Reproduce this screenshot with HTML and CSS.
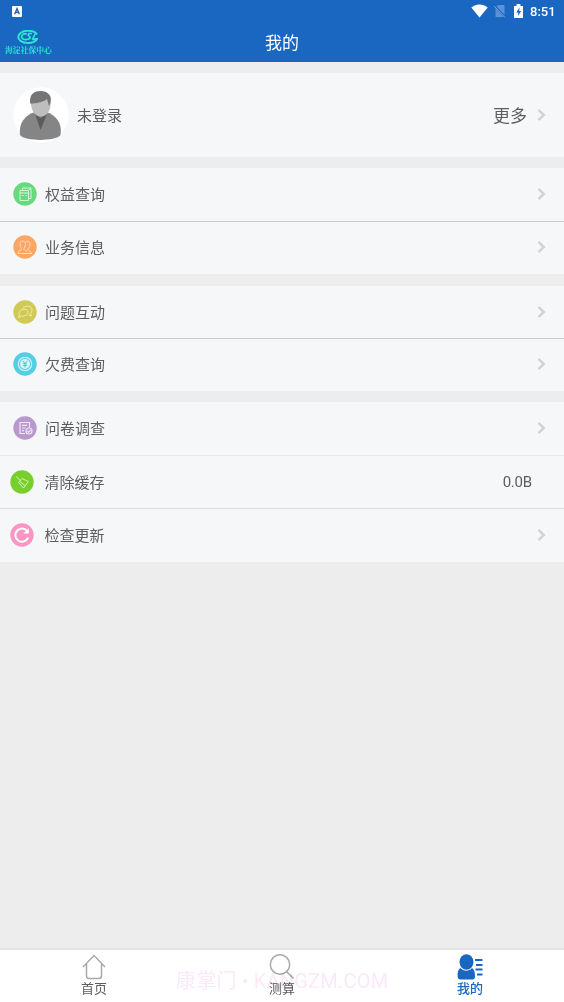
FILE: index.html
```html
<!DOCTYPE html>
<html lang="zh-CN">
<head>
<meta charset="utf-8">
<title>我的</title>
<link rel="stylesheet" href="styles.css">
</head>
<body>
<svg class="defs" width="0" height="0"><defs><symbol id="chevron" viewBox="0 0 9 14"><path d="M1.500 1.800 6.800 7 1.500 12.200" fill="none" stroke="#d2d3d5" stroke-width="2.500"/></symbol></defs></svg>
<div class="screen">
  <header class="header">
    <div class="status">
      <svg class="app-badge" viewBox="0 0 10 11"><rect width="10" height="11" rx="1" fill="#fff"/><path d="M2.700 8.200 5 2.500 7.300 8.200M3.600 6.400h2.800" fill="none" stroke="#315b9d" stroke-width="1.400"/></svg>
      <svg class="wifi" viewBox="0 0 17 14"><path d="M.3 3.600C5-.5 12-.5 16.700 3.600L8.500 13.600Z" fill="#fff"/></svg>
      <svg class="sim" viewBox="0 0 12 14"><path d="M4 1h6.500v12h-9V3.500Z" fill="#5b92d5"/><path d="M0 1.300 11.500 13.500" stroke="#1967c1" stroke-width="2"/><path d="M0 2 11 13.500" stroke="#79a6dc" stroke-width="1"/></svg>
      <svg class="battery" viewBox="0 0 9 14"><path d="M0 2h2.600V0h3.800v2H9v12H0Z" fill="#fff"/><path d="M5.500 3.600 2.200 8.500h2v3.400l2.900-5H5.200Z" fill="#1967c1"/></svg>
      <span class="time">8:51</span>
    </div>
    <div class="titlebar">
      <div class="brand">
        <svg class="brand-mark" viewBox="0 0 22 14"><path d="M20 4.500C17-.5 5-.5 2 4.800-.5 9.500 5 13 11 13c4 0 7.500-1.300 9-4" fill="none" stroke="#2de8cf" stroke-width="1.900"/><path d="M9.800 4C6.800 3 4.500 5 4.700 7s2.800 3 4.800 2.400M15 3.700c-2.500-.7-4.500.5-3.500 1.800l1.300 1.300c1 1.500-1.500 3-4 2.600M18.300 3.500l-3 6.300M15.500 9.700l5.500-1" fill="none" stroke="#2de8cf" stroke-width="1.700"/></svg>
        <span class="brand-name">海淀社保中心</span>
      </div>
      <h1 class="title">我的</h1>
    </div>
  </header>

  <main class="content">
    <section class="profile">
      <svg class="avatar" viewBox="0 0 56 56"><circle cx="28" cy="28" r="27.700" fill="#fff"/><path d="M7 48C5.500 36 12 28 22 25h11c10 3 16.500 11 14.500 23-5 6.500-35.500 6.500-40.500 0Z" fill="#858585"/><path d="m22 27 5.500 4 6.500-4-6.500 16Z" fill="#5c5c5c"/><path d="M18 14Q20 8 28 8t9.500 6c1 9-3.500 15.500-9.700 15.500S17.500 23 18 14Z" fill="#bebebe"/><path d="M17.200 16.500C16 8 20.500 4 27.500 4s12 4.500 10 11.500L36 19l-2-7c-5 3.500-10.500 4.300-16.800 4.500Z" fill="#757575"/></svg>
      <span class="user">未登录</span>
      <span class="more">更多</span>
      <svg class="chevron"><use href="#chevron"/></svg>
    </section>

    <section class="group">
      <div class="row">
        <svg class="icon" viewBox="0 0 24 24"><circle cx="12" cy="12" r="11.700" fill="#69d97e"/><g fill="none" stroke="#d2f6d8" stroke-width="1"><path d="M7 8.500h8.500V18.500H7ZM9.500 8V6h8.500v10.500h-2M7 11h8.500M9 13.500h1.500M12.500 13.500H14M16 8l2-2"/></g></svg>
        <span class="label">权益查询</span><svg class="chevron"><use href="#chevron"/></svg>
      </div>
      <div class="row">
        <svg class="icon" viewBox="0 0 24 24"><circle cx="12" cy="12" r="11.700" fill="#faa765"/><g fill="none" stroke="#ffdcbd" stroke-width="1"><path d="M8.500 13.500C6.500 11 6.500 6 9.500 6s4 4 1.500 7.500v1.500M12.500 7.500c1-2 4.500-2 4.500 1.500 0 2-1 3.500-2 4.500l.3 1.500 3.700 3.500H5l1-2.500 3-1.500M12 15l2 1.500"/></g></svg>
        <span class="label">业务信息</span><svg class="chevron"><use href="#chevron"/></svg>
      </div>
    </section>

    <section class="group group-short">
      <div class="row">
        <svg class="icon" viewBox="0 0 24 24"><circle cx="12" cy="12" r="11.700" fill="#d1c955"/><g fill="none" stroke="#f2edac" stroke-width="1"><path d="M9.500 8.500C11 5.500 18 5 19 9c.5 2-1 4-1.500 4.500l1 2.500-3-1.200"/><path d="M6 13.500C5 9.500 14 7.500 15 11.500c.6 3.500-4 5-6.500 4.500L5.500 17.500l1-2.500Z"/></g></svg>
        <span class="label">问题互动</span><svg class="chevron"><use href="#chevron"/></svg>
      </div>
      <div class="row">
        <svg class="icon" viewBox="0 0 24 24"><circle cx="12" cy="12" r="11.700" fill="#54cee2"/><circle cx="12" cy="12" r="6.700" fill="none" stroke="#c7f4f8" stroke-width="1.200"/><circle cx="12" cy="12" r="5" fill="#d3f5f7"/><path d="m9.800 8.800 2.200 2.700 2.200-2.700M12 11.500V15.500M10 11.800h4M10.300 13.500h3.400" fill="none" stroke="#3fc3cd" stroke-width=".9"/></svg>
        <span class="label">欠费查询</span><svg class="chevron"><use href="#chevron"/></svg>
      </div>
    </section>

    <section class="group group-last">
      <div class="row">
        <svg class="icon" viewBox="0 0 24 24"><circle cx="12" cy="12" r="11.700" fill="#b79acb"/><g fill="none" stroke="#f2e5fb" stroke-width="1.200"><path d="M12 17.500H7v-11h9.500v5M9 9.300h5M9 12h3.500M9 14.700h2"/><circle cx="16" cy="15" r="3"/><path d="m14.500 15 1.200 1.200 2-2.300"/></g></svg>
        <span class="label">问卷调查</span><svg class="chevron"><use href="#chevron"/></svg>
      </div>
      <div class="row row-tool row-soft">
        <svg class="icon" viewBox="0 0 24 24"><circle cx="12" cy="12" r="11.700" fill="#78cf2c"/><path d="m6 6.500 4.500 4M8.500 12.500l3.500-4 6.300 3-4.800 6.500ZM9.500 11.300l5.500 4.200" fill="none" stroke="#d2f5ac" stroke-width="1"/></svg>
        <span class="label">清除缓存</span><span class="size">0.0B</span>
      </div>
      <div class="row row-tool">
        <svg class="icon" viewBox="0 0 24 24"><circle cx="12" cy="12" r="11.700" fill="#fa96c4"/><path d="M17.200 8.100a6.600 6.600 0 1 0 .9 6.500" fill="none" stroke="#fff" stroke-width="2"/><path d="M18.800 5v5.600h-5.400Z" fill="#fff"/></svg>
        <span class="label">检查更新</span><svg class="chevron"><use href="#chevron"/></svg>
      </div>
    </section>
  </main>

  <nav class="tabs">
    <div class="tab">
      <svg class="tab-icon" viewBox="0 0 26 26"><path d="M2 13 13 1.500 24 13M5.500 10v12q0 2.500 2.500 2.500h10q2.500 0 2.500-2.500V10" fill="none" stroke="#aaa" stroke-width="1.500"/></svg><span>首页</span>
    </div>
    <div class="tab">
      <svg class="tab-icon" viewBox="0 0 26 26"><circle cx="11" cy="10.500" r="9.700" fill="none" stroke="#aaa" stroke-width="1.500"/><path d="m17.500 17.500 7 7" stroke="#aaa" stroke-width="1.600"/></svg><span>测算</span>
    </div>
    <div class="tab tab-active">
      <svg class="tab-icon" viewBox="0 0 26 26"><ellipse cx="9.500" cy="8" rx="7" ry="7.700" fill="#1967c1"/><path d="M3.500 14C.5 16 .5 19 .7 23q.2 2.500 3 2.500h11.600q2.700 0 2.700-3c0-4-.5-7-3-8.500-3 3.500-8.500 3.500-11.500 0Z" fill="#1967c1"/><path d="M18 6h7.500M19 11h6.500M18.500 15.500h7M20 20.500h5.500" stroke="#1967c1" stroke-width="1.800"/></svg><span>我的</span>
    </div>
    <div class="watermark">康掌门 • KANGZM.COM</div>
  </nav>
</div>
</body>
</html>
```

FILE: styles.css
```css
* { box-sizing: border-box; }
body { margin: 0; font-family: Roboto, "Noto Sans CJK SC", sans-serif; color: #5c5d5f; }
.defs { display: block; }
.screen { width: 564px; height: 1002px; display: flex; flex-direction: column; background: #ededed; }
.header { height: 62px; background: #1967c1; color: #fff; }
.status { height: 22px; display: flex; align-items: center; padding: 0 8px 0 12px; }
.app-badge { width: 10px; height: 11px; margin-right: auto; }
.wifi { width: 17px; height: 14px; margin-right: 6px; }
.sim { width: 12px; height: 14px; margin-right: 8px; }
.battery { width: 9px; height: 14px; margin-right: 7px; }
.time { font-size: 13px; font-weight: 500; line-height: 22px; padding-top: 2px; width: 26px; white-space: nowrap; }
.titlebar { height: 40px; display: grid; grid-template-columns: 1fr auto 1fr; }
.brand { display: flex; flex-direction: column; padding: 8px 0 0 5px; width: 54px; }
.brand-mark { width: 22px; height: 14px; margin-left: 12px; }
.brand-name { font-family: "Noto Serif CJK SC", "Noto Sans CJK SC", serif; font-size: 7.800px; font-weight: 700; line-height: 12px; color: #2de8cf; white-space: nowrap; }
.title { margin: 0; font-size: 17px; font-weight: 400; line-height: 40px; padding-top: 1px; }
.content { flex: 1; padding-top: 11px; }
.profile { height: 84px; display: flex; align-items: center; background: #f6f7f9; padding: 0 18px 0 12.500px; }
.avatar { width: 56px; height: 56px; margin-right: 8.500px; }
.user { font-size: 15px; padding-bottom: 2px; }
.more { font-size: 17px; margin-left: auto; padding-bottom: 2px; }
.chevron { width: 9px; height: 14px; margin-left: auto; }
.more + .chevron { margin-left: 10px; }
.group { margin-top: 11px; background: #f6f7f9; }
.group + .group { margin-top: 12px; }
.group + .group-last { margin-top: 11px; }
.row { height: 53px; display: flex; align-items: center; padding: 0 18px 1px 12.500px; }
.row + .row { border-top: 1px solid #c9cacc; padding-bottom: 2px; }
.group-short .row:first-child { height: 52px; }
.group-last .row:last-child { height: 54px; }
.group-last .row + .row { border-top-color: #dadbdd; padding-bottom: 1px; }
.group-last .row-soft.row-tool { border-top-color: #e9eaeb; }
.icon { width: 24px; height: 24px; margin-right: 8.500px; }
.label { font-size: 15px; padding-bottom: 1px; }
.row-tool { padding-left: 10px; }
.row-tool .icon { margin-right: 10.500px; }
.size { font-size: 15px; letter-spacing: -0.2px; margin-left: auto; margin-right: 14px; }
.tabs { position: relative; height: 54px; display: grid; grid-template-columns: repeat(3, 1fr); background: #fff; border-top: 2px solid #e5e5e5; }
.tab { display: flex; flex-direction: column; align-items: center; padding-top: 4px; font-size: 13px; line-height: 18px; }
.tab-icon { width: 26px; height: 26px; }
.tab-active { color: #1967c1; font-weight: 500; }
.watermark { position: absolute; left: 176px; top: 17px; font-size: 20px; letter-spacing: 0.2px; line-height: 28px; color: #fbe9fa; white-space: nowrap; mix-blend-mode: multiply; }
```
